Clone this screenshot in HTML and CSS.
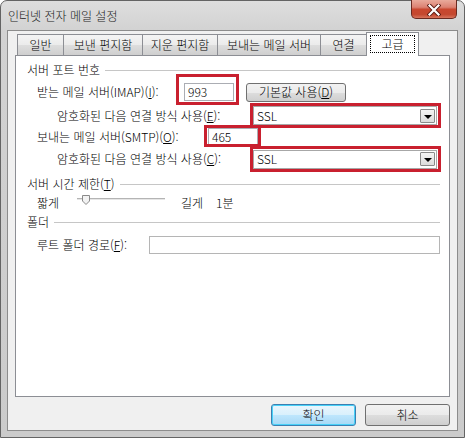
FILE: index.html
```html
<!DOCTYPE html>
<html lang="ko">
<head>
    <meta charset="UTF-8">
    <meta name="viewport" content="width=device-width, initial-scale=1.0">
    <title>인터넷 전자 메일 설정</title>
    <link rel="stylesheet" href="styles.css">
</head>
<body>
    <div class="window">
        <div class="titlebar">
            <span class="title">인터넷 전자 메일 설정</span>
            <div class="close-btn">
                <svg width="14" height="12" viewBox="0 0 14 12">
                    <path d="M2.5 1.5 L11.5 10.5 M11.5 1.5 L2.5 10.5" stroke="#5a1a12" stroke-width="4" stroke-linecap="square"/>
                    <path d="M2.5 1.5 L11.5 10.5 M11.5 1.5 L2.5 10.5" stroke="#ffffff" stroke-width="2.2" stroke-linecap="square"/>
                </svg>
            </div>
        </div>
        <div class="client">
            <div class="tabs">
                <div class="tab tab-general">일반</div>
                <div class="tab tab-sent">보낸 편지함</div>
                <div class="tab tab-deleted">지운 편지함</div>
                <div class="tab tab-outgoing">보내는 메일 서버</div>
                <div class="tab tab-connect">연결</div>
                <div class="tab tab-advanced active"><span class="focus">고급</span></div>
            </div>
            <div class="panel">
                <div class="group">
                    <span>서버 포트 번호</span>
                    <span class="group-line"></span>
                </div>
                <div class="row row-imap">
                    <span class="lbl lbl-imap">받는 메일 서버(IMAP)(<u>I</u>):</span>
                    <div class="mark mark-imap">
                        <div class="textbox port">993</div>
                    </div>
                    <div class="btn btn-default">기본값 사용(<u>D</u>)</div>
                </div>
                <div class="row row-enc1">
                    <span class="lbl lbl-enc">암호화된 다음 연결 방식 사용(<u>E</u>):</span>
                    <div class="mark mark-enc1">
                        <div class="combo">
                            <span class="combo-text">SSL</span>
                            <span class="combo-btn"><span class="arrow"></span></span>
                        </div>
                    </div>
                </div>
                <div class="row row-smtp">
                    <span class="lbl lbl-smtp">보내는 메일 서버(SMTP)(<u>O</u>):</span>
                    <div class="mark mark-smtp">
                        <div class="textbox port">465</div>
                    </div>
                </div>
                <div class="row row-enc2">
                    <span class="lbl lbl-enc">암호화된 다음 연결 방식 사용(<u>C</u>):</span>
                    <div class="mark mark-enc2">
                        <div class="combo">
                            <span class="combo-text">SSL</span>
                            <span class="combo-btn"><span class="arrow"></span></span>
                        </div>
                    </div>
                </div>
                <div class="group group-timeout">
                    <span>서버 시간 제한(<u>T</u>)</span>
                    <span class="group-line"></span>
                </div>
                <div class="row row-slider">
                    <span class="lbl-short">짧게</span>
                    <svg class="slider" width="88" height="12" viewBox="0 0 88 12">
                        <rect x="0" y="3" width="88" height="1" fill="#b4b4b4"/>
                        <rect x="0" y="4" width="88" height="1" fill="#e6e6e6"/>
                        <path d="M5.5 0.5 H12.5 V6 L9 9.5 L5.5 6 Z" fill="#f2f2f2" stroke="#8a8a8a"/>
                    </svg>
                    <span class="lbl-long">길게</span>
                    <span class="lbl-value">1분</span>
                </div>
                <div class="group group-folder">
                    <span>폴더</span>
                    <span class="group-line"></span>
                </div>
                <div class="row row-root">
                    <span class="lbl lbl-root">루트 폴더 경로(<u>F</u>):</span>
                    <div class="textbox root-path"></div>
                </div>
            </div>
            <div class="actions">
                <div class="btn btn-action btn-ok">확인</div>
                <div class="btn btn-action">취소</div>
            </div>
        </div>
    </div>
</body>
</html>
```

FILE: styles.css
```css
* {
    box-sizing: border-box;
}
body {
    margin: 0;
    padding: 0;
    font-family: "Noto Sans CJK KR", "Noto Sans", sans-serif;
    font-size: 12px;
    font-weight: 300;
    color: #000;
    background-color: #fff;
}
u {
    text-decoration: underline;
    text-underline-offset: 1px;
}

/* window frame */
.window {
    width: 465px;
    height: 438px;
    border: 1px solid #646464;
    border-radius: 7px 7px 0 0;
    background: linear-gradient(to bottom, #dedede 0px, #d2d2d2 30px, #cbcbcb 100%);
    padding: 0 6px 6px;
    display: flex;
    flex-direction: column;
}
.titlebar {
    height: 29px;
    display: flex;
    align-items: flex-start;
    justify-content: space-between;
}
.title {
    margin-top: 6px;
    margin-left: 1px;
    line-height: 18px;
    color: #1a1a1a;
}
.close-btn {
    width: 46px;
    height: 19px;
    margin-top: -1px;
    margin-right: 1px;
    border: 1px solid #6a2a20;
    border-top: none;
    border-radius: 0 0 5px 5px;
    background: linear-gradient(to bottom, #e9aa9b 0%, #dc8272 40%, #c9472f 52%, #c4482f 80%, #d8745c 100%);
    display: flex;
    align-items: center;
    justify-content: center;
}
.close-btn svg {
    display: block;
    margin-top: 1px;
}

/* client area */
.client {
    flex: 1;
    border: 1px solid #8c8c8c;
    background-color: #f0f0f0;
    padding: 2px 7px 4px 7px;
    display: flex;
    flex-direction: column;
}

/* tabs */
.tabs {
    height: 22px;
    display: flex;
    align-items: flex-end;
    padding-left: 2px;
    position: relative;
    z-index: 1;
}
.tab {
    height: 21px;
    border: 1px solid #8c8e94;
    border-bottom: none;
    margin-right: -1px;
    background: linear-gradient(to bottom, #f4f4f4 0%, #ebebeb 50%, #dddddd 51%, #cfcfcf 100%);
    display: flex;
    align-items: center;
    justify-content: center;
    line-height: 14px;
}
.tab-general { width: 47px; }
.tab-sent { width: 80px; }
.tab-deleted { width: 76px; }
.tab-outgoing { width: 104px; }
.tab-connect { width: 47px; }
.tab-advanced { width: 53px; }
.tab.active {
    height: 24px;
    margin-bottom: -1px;
    margin-left: 0;
    background: #fff;
    align-items: flex-start;
    padding-top: 2px;
}
.focus {
    border: 1px dotted #000;
    width: 45px;
    height: 18px;
    display: flex;
    align-items: center;
    justify-content: center;
}

/* panel */
.panel {
    flex: 1;
    border: 1px solid #8c8e94;
    background-color: #fff;
    padding: 7px 9px 0 11px;
    display: flex;
    flex-direction: column;
}
.group {
    height: 14px;
    display: flex;
    align-items: center;
    line-height: 14px;
}
.group-line {
    flex: 1;
    height: 1px;
    margin-left: 5px;
    background-color: #c6c6c6;
}
.group-timeout {
    margin-top: 7px;
}
.group-folder {
    margin-top: 3px;
}
.row {
    display: flex;
    align-items: center;
    padding-left: 10px;
    line-height: 14px;
}
.row-imap {
    height: 20px;
    margin-top: 5px;
}
.row-enc1 {
    height: 21px;
    margin-top: 3px;
}
.row-smtp {
    height: 20px;
    margin-top: 1px;
}
.row-enc2 {
    height: 22px;
    margin-top: 1px;
}
.row-slider {
    height: 18px;
    margin-top: 3px;
}
.row-root {
    height: 20px;
    margin-top: 6px;
}
.lbl {
    flex-shrink: 0;
    white-space: nowrap;
}
.lbl-imap { width: 147px; }
.lbl-smtp { width: 171px; }
.lbl-enc {
    width: 196px;
    margin-left: 20px;
}
.lbl-root { width: 112px; }

.textbox {
    height: 18px;
    border: 1px solid #abadb3;
    background-color: #fff;
    padding-left: 3px;
    line-height: 16px;
}
.port {
    width: 50px;
}
.root-path {
    flex: 1;
    border-color: #b5b5b5;
}

.combo {
    width: 184px;
    height: 19px;
    border: 1px solid #a7a7a7;
    background-color: #fff;
    display: flex;
    align-items: center;
    justify-content: space-between;
    padding: 0 1px 0 3px;
}
.combo-btn {
    width: 15px;
    height: 14px;
    border: 1px solid #8a8a8a;
    border-radius: 1px;
    background: linear-gradient(to bottom, #f4f4f4, #dcdcdc);
    display: flex;
    align-items: center;
    justify-content: center;
}
.arrow {
    width: 0;
    height: 0;
    margin-top: 2px;
    border-left: 4px solid transparent;
    border-right: 4px solid transparent;
    border-top: 4px solid #000;
}

/* red highlight boxes drawn over the fields */
.mark {
    position: relative;
}
.mark::after {
    content: '';
    position: absolute;
    border: 3px solid #c9202f;
}
.mark-imap::after {
    top: -9px;
    left: -8px;
    right: -5px;
    bottom: -4px;
}
.mark-enc1::after {
    top: -3px;
    left: -3px;
    right: -4px;
    bottom: -3px;
}
.mark-smtp::after {
    top: -3px;
    left: -4px;
    right: -3px;
    bottom: -1px;
    z-index: 2;
}
.mark-enc2::after {
    top: -4px;
    left: -3px;
    right: -4px;
    bottom: -3px;
}

/* slider */
.lbl-short {
    width: 40px;
}
.slider {
    display: block;
    margin-top: -4px;
}
.lbl-long {
    margin-left: 16px;
}
.lbl-value {
    margin-left: 13px;
}

/* buttons */
.btn {
    display: flex;
    align-items: center;
    justify-content: center;
    border: 1px solid #707070;
    border-radius: 3px;
    background: linear-gradient(to bottom, #f2f2f2 0%, #ebebeb 50%, #dddddd 51%, #cfcfcf 100%);
    line-height: 14px;
}
.btn-default {
    width: 100px;
    height: 19px;
    margin-left: 12px;
}
.actions {
    display: flex;
    justify-content: flex-end;
    gap: 9px;
    margin-top: 7px;
}
.btn-action {
    width: 85px;
    height: 22px;
}
.btn-ok {
    border-color: #3c7fb1;
    background: linear-gradient(to bottom, #eaf6fd 0%, #d9f0fc 50%, #bee6fd 51%, #a7d9f5 100%);
    box-shadow: inset 0 0 0 1px #48d1f8;
}
```
